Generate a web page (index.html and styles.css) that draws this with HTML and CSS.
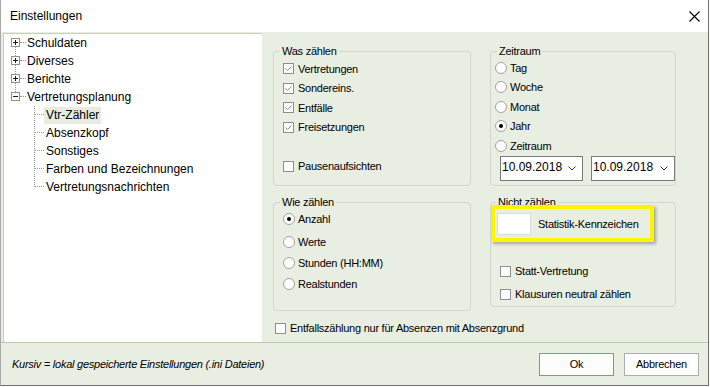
FILE: index.html
```html
<!DOCTYPE html>
<html lang="de">
<head>
<meta charset="utf-8">
<title>Einstellungen</title>
<link rel="stylesheet" href="styles.css">
</head>
<body>
<div class="window">
  <div class="titlebar">
    <span class="title">Einstellungen</span>
    <svg class="close" width="11" height="11" viewBox="0 0 11 11"><path d="M0.5 0.5L10.5 10.5M10.5 0.5L0.5 10.5" stroke="#000" stroke-width="1.1" fill="none"/></svg>
  </div>
  <div class="main">
    <div class="tree">
      <div class="node top next"><span class="exp plus"></span><span class="lbl">Schuldaten</span></div>
      <div class="node top next"><span class="exp plus"></span><span class="lbl">Diverses</span></div>
      <div class="node top next"><span class="exp plus"></span><span class="lbl">Berichte</span></div>
      <div class="node top"><span class="exp minus"></span><span class="lbl">Vertretungsplanung</span></div>
      <div class="children">
        <div class="node child"><span class="lbl sel">Vtr-Zähler</span></div>
        <div class="node child"><span class="lbl">Absenzkopf</span></div>
        <div class="node child"><span class="lbl">Sonstiges</span></div>
        <div class="node child"><span class="lbl">Farben und Bezeichnungen</span></div>
        <div class="node child"><span class="lbl">Vertretungsnachrichten</span></div>
      </div>
    </div>
    <div class="content">
      <div class="groups">
        <fieldset class="grp was">
          <legend>Was zählen</legend>
          <div class="opt"><span class="cb on"><svg width="9" height="9" viewBox="0 0 9 9"><path d="M1.5 4.5L3.5 6.5L7.5 2.5" stroke="#8a8a8a" stroke-width="1" fill="none"/></svg></span><span>Vertretungen</span></div>
          <div class="opt"><span class="cb on"><svg width="9" height="9" viewBox="0 0 9 9"><path d="M1.5 4.5L3.5 6.5L7.5 2.5" stroke="#8a8a8a" stroke-width="1" fill="none"/></svg></span><span>Sondereins.</span></div>
          <div class="opt"><span class="cb on"><svg width="9" height="9" viewBox="0 0 9 9"><path d="M1.5 4.5L3.5 6.5L7.5 2.5" stroke="#8a8a8a" stroke-width="1" fill="none"/></svg></span><span>Entfälle</span></div>
          <div class="opt"><span class="cb on"><svg width="9" height="9" viewBox="0 0 9 9"><path d="M1.5 4.5L3.5 6.5L7.5 2.5" stroke="#8a8a8a" stroke-width="1" fill="none"/></svg></span><span>Freisetzungen</span></div>
          <div class="opt spacer"></div>
          <div class="opt"><span class="cb"></span><span>Pausenaufsichten</span></div>
        </fieldset>
        <fieldset class="grp zeit">
          <legend>Zeitraum</legend>
          <div class="opt"><span class="rb"></span><span>Tag</span></div>
          <div class="opt"><span class="rb"></span><span>Woche</span></div>
          <div class="opt"><span class="rb"></span><span>Monat</span></div>
          <div class="opt"><span class="rb on"></span><span>Jahr</span></div>
          <div class="opt"><span class="rb"></span><span>Zeitraum</span></div>
          <div class="dates">
            <div class="date"><span>10.09.2018</span><svg width="8" height="5" viewBox="0 0 8 5"><path d="M0.5 0.5L4 4L7.5 0.5" stroke="#333" stroke-width="1" fill="none"/></svg></div>
            <div class="date wide"><span>10.09.2018</span><svg width="8" height="5" viewBox="0 0 8 5"><path d="M0.5 0.5L4 4L7.5 0.5" stroke="#333" stroke-width="1" fill="none"/></svg></div>
          </div>
        </fieldset>
        <fieldset class="grp wie">
          <legend>Wie zählen</legend>
          <div class="opt"><span class="rb on"></span><span>Anzahl</span></div>
          <div class="opt"><span class="rb"></span><span>Werte</span></div>
          <div class="opt"><span class="rb"></span><span>Stunden (HH:MM)</span></div>
          <div class="opt"><span class="rb"></span><span>Realstunden</span></div>
        </fieldset>
        <fieldset class="grp nicht">
          <legend>Nicht zählen</legend>
          <div class="hl"><span class="swatch"></span><span>Statistik-Kennzeichen</span></div>
          <div class="opt statt"><span class="cb"></span><span>Statt-Vertretung</span></div>
          <div class="opt klaus"><span class="cb"></span><span>Klausuren neutral zählen</span></div>
        </fieldset>
      </div>
      <div class="opt entfall"><span class="cb"></span><span>Entfallszählung nur für Absenzen mit Absenzgrund</span></div>
    </div>
  </div>
  <div class="footer">
    <span class="note">Kursiv = lokal gespeicherte Einstellungen (.ini Dateien)</span>
    <div class="buttons">
      <button class="btn default">Ok</button>
      <button class="btn">Abbrechen</button>
    </div>
  </div>
</div>
</body>
</html>
```
FILE: styles.css
```css
html, body {
  margin: 0;
  padding: 0;
  background: #ffffff;
}

body {
  font-family: "Liberation Sans", Arial, sans-serif;
  color: #000;
}

.window {
  width: 709px;
  height: 386px;
  box-sizing: border-box;
  border-left: 1px solid #aaaaaa;
  border-right: 1px solid #707070;
  border-bottom: 1px solid #707070;
  background: #e9eee3;
  display: flex;
  flex-direction: column;
}

.titlebar {
  height: 32px;
  flex: none;
  background: #ffffff;
  display: flex;
  align-items: center;
  justify-content: space-between;
  padding: 0 8px 0 9px;
}

.title {
  font-size: 12px;
}

.close {
  display: block;
}

.main {
  height: 310px;
  flex: none;
  display: flex;
}

/* Tree */
.tree {
  width: 259px;
  height: 309px;
  margin: 1px 0 0 2px;
  box-sizing: border-box;
  background: #ffffff;
  border-top: 1px solid #c4d2b8;
  border-left: 1px solid #c4d2b8;
  font-size: 12px;
  flex: none;
}

.node {
  position: relative;
  height: 18px;
  display: flex;
  align-items: center;
}

.node.top {
  padding-left: 23px;
}

.node.top::before {
  content: "";
  position: absolute;
  left: 16px;
  top: 8px;
  width: 6px;
  border-top: 1px dotted #9a9a9a;
}

.node.next::after {
  content: "";
  position: absolute;
  left: 11px;
  top: 13px;
  height: 9px;
  border-left: 1px dotted #9a9a9a;
}

.exp {
  position: absolute;
  left: 7px;
  top: 4px;
  width: 9px;
  height: 9px;
  box-sizing: border-box;
  border: 1px solid #919191;
  background: #ffffff;
  z-index: 1;
}

.exp::before {
  content: "";
  position: absolute;
  left: 1px;
  top: 3px;
  width: 5px;
  height: 1px;
  background: #1c1c1c;
}

.exp.plus::after {
  content: "";
  position: absolute;
  left: 3px;
  top: 1px;
  width: 1px;
  height: 5px;
  background: #1c1c1c;
}

.children {
  position: relative;
}

.children::before {
  content: "";
  position: absolute;
  left: 30px;
  top: 0;
  height: 81px;
  border-left: 1px dotted #9a9a9a;
}

.node.child::before {
  content: "";
  position: absolute;
  left: 31px;
  top: 8px;
  width: 9px;
  border-top: 1px dotted #9a9a9a;
}

.node.child .lbl {
  margin-left: 40px;
  padding: 0 2px;
  line-height: 17px;
}

.lbl.sel {
  background: #e6ece0;
}

/* Content */
.content {
  flex: 1;
  padding: 13px 0 0 11px;
  font-size: 11px;
  letter-spacing: -0.25px;
}

.groups {
  display: grid;
  grid-template-columns: 198px 186px;
  grid-template-rows: 141px 115px;
  column-gap: 19px;
  row-gap: 10px;
}

.grp {
  margin: 0;
  min-width: 0;
  box-sizing: border-box;
  border: 1px solid #d1d7cc;
  border-radius: 4px;
  padding: 0;
}

.grp legend {
  padding: 0 2px;
  margin-left: 6px;
  line-height: 13px;
  font-size: 11px;
}

.was {
  padding-top: 1px;
}

.was .opt,
.wie .opt,
.nicht .opt {
  margin-left: 9px;
}

.zeit .opt {
  margin-left: 4px;
}

.nicht legend {
  margin-left: 5px;
}

.nicht {
  height: 111px;
  align-self: start;
}

.opt {
  display: flex;
  align-items: center;
  height: 19.5px;
  white-space: nowrap;
}

.cb {
  width: 11px;
  height: 11px;
  box-sizing: border-box;
  border: 1px solid #8f8f8f;
  background: #ffffff;
  margin-right: 4px;
  flex: none;
  display: flex;
  align-items: center;
  justify-content: center;
}

.cb svg {
  display: block;
}

.rb {
  width: 12px;
  height: 12px;
  box-sizing: border-box;
  border: 1px solid #a2a2a2;
  border-radius: 50%;
  background: #ffffff;
  margin-right: 3px;
  flex: none;
  display: flex;
  align-items: center;
  justify-content: center;
}

.rb.on::after {
  content: "";
  width: 4px;
  height: 4px;
  border-radius: 50%;
  background: #000;
}

.dates {
  display: flex;
  gap: 8px;
  margin-left: 9px;
}

.date {
  width: 84px;
  height: 25px;
  box-sizing: border-box;
  border: 1px solid #7a7a7a;
  background: #ffffff;
  display: flex;
  align-items: center;
  justify-content: space-between;
  padding: 0 6px 2px 1px;
  font-size: 12px;
  letter-spacing: 0;
}

.date svg {
  display: block;
  margin-top: 2px;
}

.date.wide {
  width: 85px;
}

.wie .opt {
  height: 21px;
}

.wie .opt:first-of-type {
  height: 20px;
  margin-bottom: 2px;
}

.hl {
  width: 163px;
  height: 37px;
  box-sizing: border-box;
  margin: -4px 0 0 0;
  border: 4px solid #fbf600;
  box-shadow: 2px 2px 3px rgba(0, 0, 0, 0.3);
  display: flex;
  align-items: center;
  position: relative;
}

.swatch {
  width: 34px;
  height: 22px;
  box-sizing: border-box;
  background: #ffffff;
  border: 1px solid #dadada;
  margin: 0 7px 0 2px;
}

.statt {
  margin-top: 19px;
  height: 20px;
}

.nicht .opt.klaus {
  margin-top: 3px;
  height: 20px;
}

.entfall {
  margin: 7px 0 0 2px;
  height: 20px;
}

/* Footer */
.footer {
  flex: 1;
  border-top: 1px solid #b9cea6;
  display: flex;
  align-items: center;
  justify-content: space-between;
  padding: 0 9px 0 11px;
}

.note {
  font-size: 11px;
  font-style: italic;
  letter-spacing: -0.25px;
}

.buttons {
  display: flex;
  gap: 10px;
}

.btn {
  width: 75px;
  height: 23px;
  box-sizing: border-box;
  background: #fdfdfd;
  border: 1px solid #adadad;
  font-family: "Liberation Sans", Arial, sans-serif;
  font-size: 11px;
  letter-spacing: -0.25px;
  color: #000;
  padding: 0;
}

.btn.default {
  border: 1px solid #7fa167;
}
```
